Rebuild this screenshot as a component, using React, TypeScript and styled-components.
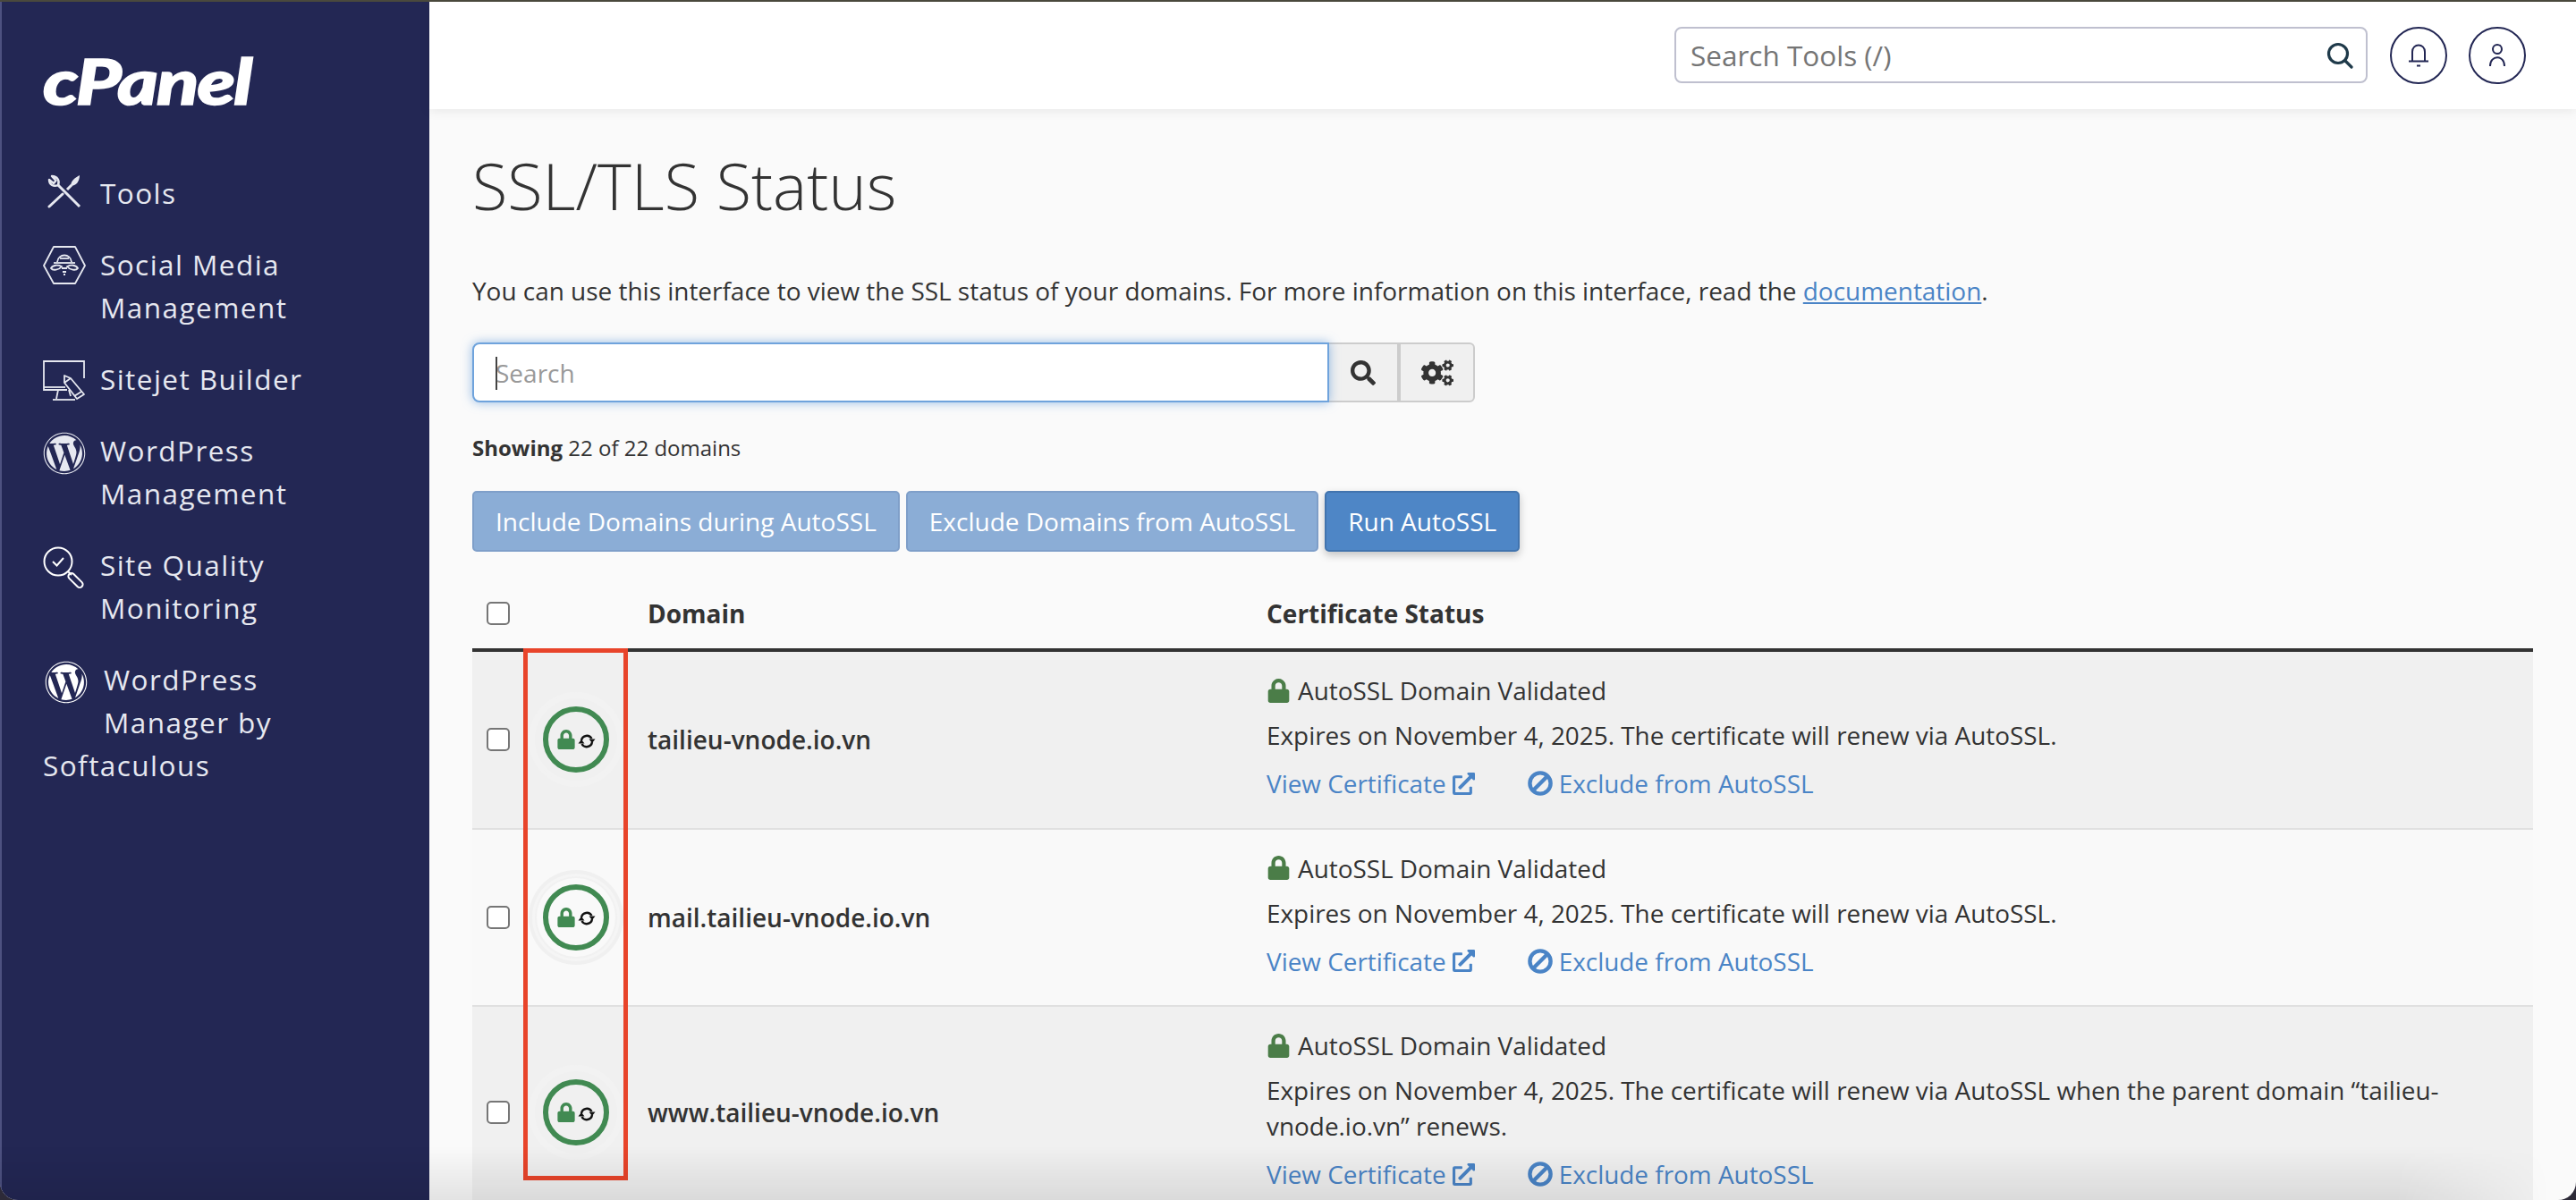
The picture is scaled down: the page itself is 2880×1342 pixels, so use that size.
import React from "react";
import styled, { createGlobalStyle } from "styled-components";
import { FaCogs, FaExternalLinkAlt, FaLock, FaSearch, FaWordpress } from "react-icons/fa";

const Global = createGlobalStyle`
  html, body { margin: 0; padding: 0; height: 100%; background: #2d2a38; }
  #root { height: 100%; }
  * { box-sizing: border-box; }
  body { font-family: "Open Sans", "Liberation Sans", sans-serif; color: #333; overflow: hidden; }
`;

const Shell = styled.div`
  position: relative;
  height: 1342px;
  padding-top: 2px;
  background: linear-gradient(#4a493d 0 2px, #2d2a38 2px);
`;
const Window = styled.div`
  display: flex;
  height: 1340px;
  overflow: hidden;
  border-radius: 0 0 20px 20px;
  background: #fafafa;
`;
const Sidebar = styled.aside`
  flex: 0 0 480px;
  background: #232754;
  border-left: 2px solid #4d5180;
  padding: 62px 0 0 46px;
  color: #e6e8f0;
`;
const Logo = styled.div`
  font-family: "Lato", sans-serif;
  font-size: 70px;
  font-weight: 900;
  font-style: italic;
  line-height: 52px;
  letter-spacing: -1.5px;
  color: #fff;
  height: 52px;
  transform: scaleX(1.24);
  transform-origin: left center;
  -webkit-text-stroke: 1.5px #fff;
`;
const Nav = styled.nav`
  margin-top: 76px;
  width: 342px;
`;
const NavItem = styled.a`
  display: block;
  font-size: 31.5px;
  line-height: 48px;
  letter-spacing: 1.45px;
  margin-bottom: 32px;
`;
const NavIcon = styled.span<{ $shift?: number }>`
  float: left;
  width: 48px;
  height: 60px;
  margin-left: ${(p) => p.$shift ?? 0}px;
  margin-right: ${(p) => 16 + (p.$shift ?? 0)}px;
  padding-top: 3px;
  display: flex;
  justify-content: center;
  align-items: flex-start;
  svg { display: block; }
`;

const Main = styled.main`
  flex: 1;
  min-width: 0;
  display: flex;
  flex-direction: column;
`;
const TopBar = styled.header`
  flex: 0 0 120px;
  background: #fff;
  box-shadow: 0 2px 12px rgba(0, 0, 0, 0.08);
  display: flex;
  align-items: center;
  justify-content: flex-end;
  gap: 25px;
  padding: 0 56px 1px 0;
  position: relative;
`;
const ToolSearch = styled.div`
  width: 775px;
  height: 63px;
  border: 2px solid #bfc0cf;
  border-radius: 8px;
  display: flex;
  align-items: center;
  justify-content: space-between;
  padding: 0 14px 0 16px;
  font-size: 31.5px;
  color: #757575;
  background: #fff;
`;
const RoundButton = styled.button`
  width: 64px;
  height: 64px;
  border-radius: 50%;
  border: 2px solid #232754;
  background: #fff;
  padding: 0;
  display: flex;
  align-items: center;
  justify-content: center;
  & + & { margin-left: -1px; }
`;
const Content = styled.div`
  flex: 1;
  min-height: 0;
  padding: 0 48px;
  overflow: hidden;
`;
const Title = styled.h1`
  margin: 40px 0 0;
  font-size: 72px;
  line-height: 90px;
  font-weight: 300;
  color: #333;
`;
const Intro = styled.p`
  margin: 53px 0 0;
  font-size: 27.95px;
  line-height: 40px;
`;
const DocLink = styled.a`
  color: #4a84c6;
  text-decoration: underline;
`;
const SearchRow = styled.div`
  margin-top: 38px;
  display: flex;
  width: 1121px;
  height: 67px;
`;
const SearchField = styled.div`
  position: relative;
  flex: 1;
`;
const SearchInput = styled.input`
  width: 100%;
  height: 100%;
  border: 2px solid #6fa3dc;
  border-radius: 8px 0 0 8px;
  box-shadow: 0 0 12px rgba(82, 145, 215, 0.6);
  padding: 0 24px;
  font: 28px "Open Sans", sans-serif;
  outline: none;
  &::placeholder { color: #999; opacity: 1; }
`;
const Caret = styled.span`
  position: absolute;
  left: 26px;
  top: 16px;
  width: 2px;
  height: 37px;
  background: #444;
`;
const AddonButton = styled.button<{ $last?: boolean; $w: number }>`
  width: ${(p) => p.$w}px;
  border: 2px solid #ccc;
  border-left: ${(p) => (p.$last ? "2px solid #ccc" : "none")};
  border-radius: ${(p) => (p.$last ? "0 6px 6px 0" : "0")};
  background: #f0f0f0;
  color: #333;
  display: flex;
  align-items: center;
  justify-content: center;
  padding: 0;
`;
const Showing = styled.div`
  margin-top: 33px;
  font-size: 24px;
  line-height: 36px;
  b { font-weight: 700; }
`;
const ButtonRow = styled.div`
  margin-top: 30px;
  display: flex;
  gap: 7px;
`;
const ActionButton = styled.button<{ $primary?: boolean }>`
  height: 68px;
  padding: 0 24px;
  border-radius: 5px;
  font: 28px "Open Sans", sans-serif;
  color: #fff;
  background: ${(p) => (p.$primary ? "#4e86c6" : "#8badd6")};
  border: 2px solid ${(p) => (p.$primary ? "#4274ae" : "#7f9fc9")};
  box-shadow: ${(p) => (p.$primary ? "0 4px 10px rgba(0,0,0,.22)" : "none")};
`;
const Table = styled.div`
  position: relative;
  margin-top: 33px;
`;
const HeadRow = styled.div`
  display: grid;
  grid-template-columns: 60px 112px 692px 1fr;
  align-items: center;
  height: 79px;
  padding-bottom: 4px;
  border-bottom: 4px solid #333;
  font-size: 28px;
  font-weight: 700;
`;
const Row = styled.div<{ $odd?: boolean }>`
  display: grid;
  grid-template-columns: 60px 112px 692px 1fr;
  align-items: center;
  background: ${(p) => (p.$odd ? "#f0f0f0" : "#f9f9f9")};
  border-bottom: 2px solid #e0e0e0;
`;
const CheckCell = styled.div`
  padding-left: 16px;
  display: flex;
`;
const Check = styled.input.attrs({ type: "checkbox" })`
  appearance: none;
  margin: 0;
  width: 26px;
  height: 26px;
  border: 2px solid #767676;
  border-radius: 5px;
  background: #fff;
`;
const IconCell = styled.div`
  display: flex;
  justify-content: flex-start;
  padding-left: 19px;
`;
const StatusRing = styled.div<{ $strong?: boolean }>`
  width: 74px;
  height: 74px;
  flex: none;
  border-radius: 50%;
  border: 6px solid #418a52;
  display: flex;
  align-items: center;
  justify-content: center;
  gap: 2px;
  color: #418a52;
  box-shadow: ${(p) =>
    p.$strong
      ? "0 0 0 7px #f9f9f9, 0 0 0 9px #f1f1f1, 0 0 0 12px #f5f5f5, 0 0 0 16px #f0f0f0"
      : "0 0 0 9px #f0f0f0, 0 0 0 13px #f2f2f2, 0 0 0 16px #f2f2f2"};
`;
const DomainCell = styled.div`
  padding-left: 24px;
  font-size: 28px;
  font-weight: 600;
  line-height: 40px;
`;
const HeadDomain = styled.div`
  padding-left: 24px;
`;
const CertCell = styled.div`
  padding: 23px 24px 29.5px;
  font-size: 27.9px;
  line-height: 40px;
`;
const CertHead = styled.div`
  display: flex;
  align-items: center;
  gap: 8px;
  color: #333;
  svg { color: #4b7d48; }
`;
const CertText = styled.div`
  margin-top: 10px;
`;
const CertLinks = styled.div`
  margin-top: 14px;
  display: flex;
  gap: 59px;
`;
const CertLink = styled.a`
  display: inline-flex;
  align-items: center;
  gap: 7px;
  color: #4a84c6;
`;
const RedBox = styled.div`
  position: absolute;
  left: 57px;
  top: 75px;
  width: 117px;
  height: 595px;
  border: 5px solid #e8442a;
  pointer-events: none;
`;
const BottomFade = styled.div`
  position: absolute;
  left: 0;
  right: 0;
  bottom: 0;
  height: 60px;
  border-radius: 0 0 20px 20px;
  background: linear-gradient(rgba(0, 0, 0, 0), rgba(0, 0, 0, 0.09));
  -webkit-mask-image: linear-gradient(90deg, #000 93%, transparent 99%);
  mask-image: linear-gradient(90deg, #000 93%, transparent 99%);
  pointer-events: none;
`;

const ToolsIcon = () => (
  <svg width="38" height="38" viewBox="0 0 38 38" fill="none" stroke="#e6e8f0" strokeWidth="3">
    <path d="M36 36 L12 12" />
    <path d="M12 12 C14 7 11 2 5 2 L9.5 7 L7 10 L2 6 C2 12 7 14 12 12Z" strokeWidth="2.4" strokeLinejoin="round" />
    <path d="M2 36 L17 22" strokeLinecap="round" />
    <path d="M22 17 L27 12" />
    <path d="M26 13 C26 8 30 4 36 1 C36 8 32 13 26 13Z" fill="#e6e8f0" stroke="none" />
  </svg>
);
const BeeIcon = () => (
  <svg width="48" height="44" viewBox="0 0 48 44" fill="none" stroke="#e6e8f0" strokeWidth="1.8">
    <path d="M12 1 H36 L47 22 L36 42 H12 L1 22Z" strokeLinejoin="round" />
    <path d="M16 18 C17 8 31 8 32 18" />
    <path d="M12 19 H36" />
    <path d="M19 14 H29" />
    <path d="M9 25 C11 21 17 21 21 23 C18 27 11 28 9 25Z" />
    <path d="M39 25 C37 21 31 21 27 23 C30 27 37 28 39 25Z" />
    <path d="M21 25 H27 M22 29 H26 M23 32 H25" />
  </svg>
);
const MonitorIcon = () => (
  <svg width="48" height="46" viewBox="0 0 48 46" fill="none" stroke="#e6e8f0" strokeWidth="1.8">
    <path d="M46 20 V1 H1 V33 H27" />
    <path d="M1 30 H25" />
    <path d="M17 33 L15 43 M29 33 L31 40" />
    <path d="M11 44 H36" />
    <path d="M24 17 L24 25 L38 43 L46 38 L31 20Z" fill="#232754" strokeLinejoin="round" />
    <path d="M24 25 L31 20 M35 40 L43 35" />
  </svg>
);
const CheckSearchIcon = () => (
  <svg width="48" height="48" viewBox="0 0 48 48" fill="none" stroke="#fff" strokeWidth="2">
    <circle cx="17" cy="17" r="15.5" />
    <path d="M11 17 L15.5 21.5 L23 13" />
    <path d="M28 28 L32 32" />
    <rect x="33" y="28" width="7" height="20" rx="3.5" transform="rotate(-45 36.5 38)" />
  </svg>
);
const BellIcon = () => (
  <svg width="22" height="26" viewBox="0 0 22 26" fill="none" stroke="#232754" strokeWidth="2">
    <path d="M4 19 V9 C4 -1 18 -1 18 9 V19" />
    <path d="M0 19.5 H22" />
    <path d="M9 24.5 H13" />
  </svg>
);
const UserIcon = () => (
  <svg width="20" height="26" viewBox="0 0 20 26" fill="none" stroke="#232754" strokeWidth="2">
    <circle cx="10" cy="6" r="5" />
    <path d="M2 25 C2 12 18 12 18 25" />
  </svg>
);
const SyncGlyph = styled.svg`
  margin-top: 3px;
  flex: none;
`;
const SyncIcon = () => (
  <SyncGlyph width="20" height="18" viewBox="0 0 20 18" fill="none">
    <path d="M4 8 A6.2 6.2 0 0 1 15.5 6 M16 10 A6.2 6.2 0 0 1 4.5 12" stroke="#111" strokeWidth="2.4" />
    <path d="M12.5 6.5 H19.5 L16 11Z M0.5 11.5 H7.5 L4 7Z" fill="#111" />
  </SyncGlyph>
);
const GlassIcon = () => (
  <svg width="30" height="30" viewBox="0 0 30 30" fill="none" stroke="#1f3a4a" strokeWidth="3.2">
    <circle cx="13" cy="13" r="10.5" />
    <path d="M21 21 L28 28" strokeLinecap="round" />
  </svg>
);
const BanIcon = () => (
  <svg width="28" height="28" viewBox="0 0 28 28" fill="none" stroke="currentColor" strokeWidth="4.4">
    <circle cx="14" cy="14" r="11.6" />
    <path d="M6 22 L22 6" />
  </svg>
);

const navItems = [
  { icon: <ToolsIcon />, label: "Tools" },
  { icon: <BeeIcon />, label: "Social Media Management" },
  { icon: <MonitorIcon />, label: "Sitejet Builder" },
  { icon: <FaWordpress size={48} color="#e6e8f0" />, label: "WordPress Management" },
  { icon: <CheckSearchIcon />, label: "Site Quality Monitoring" },
  { icon: <FaWordpress size={48} color="#fff" />, label: "WordPress Manager by Softaculous", shift: 2 },
];

const rows = [
  {
    domain: "tailieu-vnode.io.vn",
    text: "Expires on November 4, 2025. The certificate will renew via AutoSSL.",
  },
  {
    domain: "mail.tailieu-vnode.io.vn",
    text: "Expires on November 4, 2025. The certificate will renew via AutoSSL.",
  },
  {
    domain: "www.tailieu-vnode.io.vn",
    text: "Expires on November 4, 2025. The certificate will renew via AutoSSL when the parent domain “tailieu-vnode.io.vn” renews.",
  },
];

export default function App() {
  return (
    <Shell>
      <Global />
      <Window>
        <Sidebar>
          <Logo>cPanel</Logo>
          <Nav>
            {navItems.map((item) => (
              <NavItem key={item.label}>
                <NavIcon $shift={item.shift}>{item.icon}</NavIcon>
                {item.label}
              </NavItem>
            ))}
          </Nav>
        </Sidebar>
        <Main>
          <TopBar>
            <ToolSearch>
              <span>Search Tools (/)</span>
              <GlassIcon />
            </ToolSearch>
            <RoundButton>
              <BellIcon />
            </RoundButton>
            <RoundButton>
              <UserIcon />
            </RoundButton>
          </TopBar>
          <Content>
            <Title>SSL/TLS Status</Title>
            <Intro>
              You can use this interface to view the SSL status of your domains. For more information on this
              interface, read the <DocLink>documentation</DocLink>.
            </Intro>
            <SearchRow>
              <SearchField>
                <SearchInput placeholder="Search" readOnly />
                <Caret />
              </SearchField>
              <AddonButton $w={78}>
                <FaSearch size={28} />
              </AddonButton>
              <AddonButton $w={85} $last>
                <FaCogs size={36} />
              </AddonButton>
            </SearchRow>
            <Showing>
              <b>Showing</b> 22 of 22 domains
            </Showing>
            <ButtonRow>
              <ActionButton>Include Domains during AutoSSL</ActionButton>
              <ActionButton>Exclude Domains from AutoSSL</ActionButton>
              <ActionButton $primary>Run AutoSSL</ActionButton>
            </ButtonRow>
            <Table>
              <HeadRow>
                <CheckCell>
                  <Check />
                </CheckCell>
                <div />
                <HeadDomain>Domain</HeadDomain>
                <HeadDomain>Certificate Status</HeadDomain>
              </HeadRow>
              {rows.map((row, i) => (
                <Row key={row.domain} $odd={i % 2 === 0}>
                  <CheckCell>
                    <Check />
                  </CheckCell>
                  <IconCell>
                    <StatusRing $strong={i === 1}>
                      <FaLock size={22} />
                      <SyncIcon />
                    </StatusRing>
                  </IconCell>
                  <DomainCell>{row.domain}</DomainCell>
                  <CertCell>
                    <CertHead>
                      <FaLock size={27} />
                      AutoSSL Domain Validated
                    </CertHead>
                    <CertText>{row.text}</CertText>
                    <CertLinks>
                      <CertLink>
                        View Certificate <FaExternalLinkAlt size={25} />
                      </CertLink>
                      <CertLink>
                        <BanIcon /> Exclude from AutoSSL
                      </CertLink>
                    </CertLinks>
                  </CertCell>
                </Row>
              ))}
              <RedBox />
            </Table>
          </Content>
        </Main>
      </Window>
      <BottomFade />
    </Shell>
  );
}
